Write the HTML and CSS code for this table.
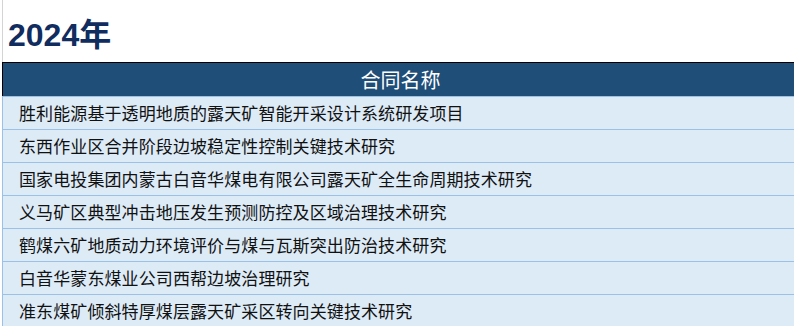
FILE: index.html
```html
<!DOCTYPE html>
<html lang="zh-CN">
<head>
<meta charset="utf-8">
<title>2024年</title>
<link rel="stylesheet" href="styles.css">
</head>
<body>
<div class="sheet">
  <h1 class="title">2024年</h1>
  <div class="table">
    <div class="head">合同名称</div>
    <div class="row">胜利能源基于透明地质的露天矿智能开采设计系统研发项目</div>
    <div class="row">东西作业区合并阶段边坡稳定性控制关键技术研究</div>
    <div class="row">国家电投集团内蒙古白音华煤电有限公司露天矿全生命周期技术研究</div>
    <div class="row">义马矿区典型冲击地压发生预测防控及区域治理技术研究</div>
    <div class="row">鹤煤六矿地质动力环境评价与煤与瓦斯突出防治技术研究</div>
    <div class="row">白音华蒙东煤业公司西帮边坡治理研究</div>
    <div class="row">准东煤矿倾斜特厚煤层露天矿采区转向关键技术研究</div>
  </div>
</div>
</body>
</html>
```
FILE: styles.css
```css
html, body {
  margin: 0;
  padding: 0;
  background: #ffffff;
  overflow: hidden;
}
body {
  width: 794px;
  height: 326px;
  font-family: "Noto Sans CJK SC", "Noto Sans", sans-serif;
}
.sheet {
  margin-left: 2px;
  width: 796px;
}
.title {
  margin: 0;
  height: 62px;
  box-sizing: border-box;
  padding: 20px 0 0 5px;
  border-left: 1px solid #d4d4d4;
  font-family: "Liberation Sans", "Noto Sans CJK SC", sans-serif;
  font-size: 32px;
  line-height: 30px;
  font-weight: bold;
  color: #112c5e;
}
.table {
  border-top: 1px solid #000000;
}
.head {
  height: 33px;
  border-left: 1px solid #000000;
  background: #1f4e78;
  color: #ffffff;
  font-size: 20px;
  line-height: 33px;
  text-align: center;
}
.row {
  height: 32px;
  border-top: 1px solid #9bc2e6;
  border-left: 1px solid #9bc2e6;
  background: #ddebf7;
  color: #111111;
  font-size: 17px;
  line-height: 32px;
  padding-left: 16px;
  letter-spacing: 0.1px;
  white-space: nowrap;
}
```
